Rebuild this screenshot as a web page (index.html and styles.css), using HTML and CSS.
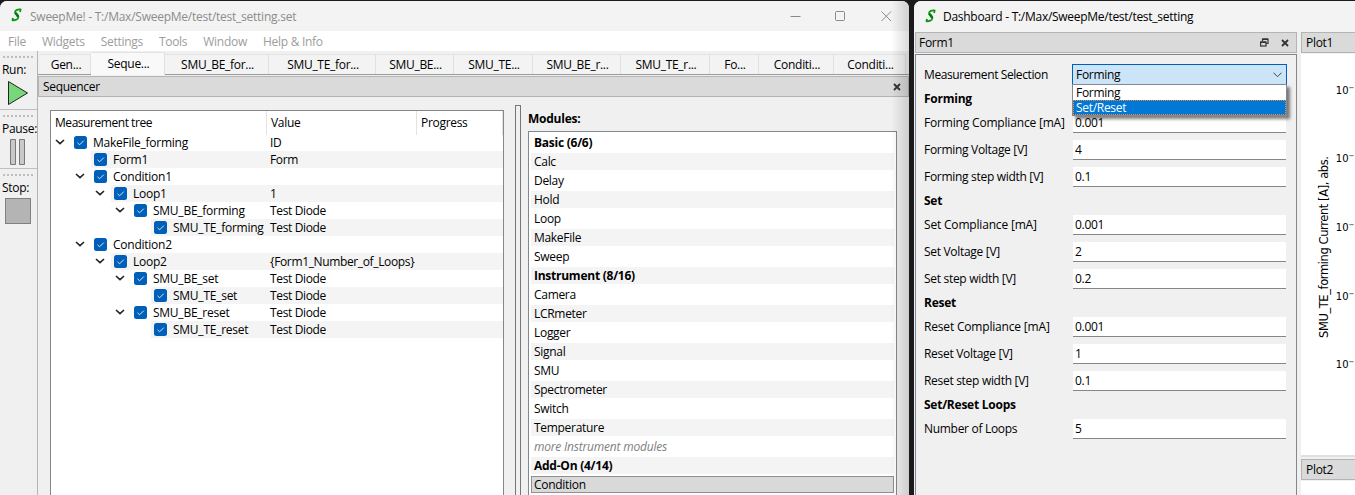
FILE: index.html
```html
<!DOCTYPE html>
<html lang="en">
<head>
  <meta charset="UTF-8">
  <meta name="viewport" content="width=device-width, initial-scale=1.0">
  <title>SweepMe!</title>
  <link rel="stylesheet" href="styles.css">
</head>
<body>

<svg class="defs">
  <symbol id="check" viewBox="0 0 13 13"><rect width="13" height="13" rx="2.5" fill="#005fb8"/><path d="M3.5 6.8L5.6 8.8L9.8 4.6" fill="none" stroke="#d5e6f5" stroke-width="1"/></symbol>
  <symbol id="arrow" viewBox="0 0 10 6"><path d="M1 1L5 4.7L9 1" fill="none" stroke="#222" stroke-width="1.6"/></symbol>
  <symbol id="logo" viewBox="0 0 11 14"><path d="M9.200 3.200L9.600 1.500C7 1.200 4.200 1.800 4.100 4C4.100 6.200 7.600 6.600 7.300 9.200C7 11.600 4 12.500 1.500 12.200L1.900 10.600" fill="none" stroke="#0b9a10" stroke-width="1.900" stroke-linejoin="round" stroke-linecap="round"/><path d="M4.400 4.600C5 6.200 7 7 7 9" fill="none" stroke="#067a10" stroke-width="2.600"/></symbol>
  <symbol id="close" viewBox="0 0 8 8"><path d="M1 1L7 7M7 1L1 7" stroke="#333" stroke-width="1.8"/></symbol>
</svg>

<div class="desktop">
  <div class="window main-window">
    <div class="titlebar inactive">
      <svg class="logo"><use href="#logo"/></svg>
      <span class="title">SweepMe! - T:/Max/SweepMe/test/test_setting.set</span>
      <svg class="win-buttons" viewBox="0 0 104 12"><path d="M0.5 6.5H10.5M45.500 2.5a1 1 0 0 1 1-1h7a1 1 0 0 1 1 1V9.500a1 1 0 0 1-1 1H46.500a1 1 0 0 1-1-1ZM91.500 1.500L101 11M101 1.500L91.500 11" fill="none" stroke="#8a8a8a"/></svg>
    </div>
    <div class="menubar">
      <span>File</span><span>Widgets</span><span>Settings</span><span>Tools</span><span>Window</span><span>Help &amp; Info</span>
    </div>
    <div class="workspace">
      <div class="toolbar">
        <div class="tool">
          <div class="grip"></div>
          <span>Run:</span>
          <svg width="26" height="26" viewBox="0 0 26 26"><path d="M3.500 1.500V24.500L22.500 13Z" fill="#78d778" stroke="#222"/></svg>
        </div>
        <div class="tool">
          <div class="grip"></div>
          <span>Pause:</span>
          <svg width="26" height="26" viewBox="0 0 26 26"><path d="M5.500 0.500H10.500V25.500H5.500ZM14.500 0.500H19.500V25.500H14.500Z" fill="#c8c8c8" stroke="#787878"/></svg>
        </div>
        <div class="tool last">
          <div class="grip"></div>
          <span>Stop:</span>
          <svg width="26" height="26" viewBox="0 0 26 26"><rect x="0.500" y="0.500" width="25" height="25" fill="#b4b4b4" stroke="#808080"/></svg>
        </div>
      </div>

      <div class="content">
        <div class="tabs">
          <div class="tab">Gen...</div>
          <div class="tab active">Seque...</div>
          <div class="tab">SMU_BE_for...</div>
          <div class="tab">SMU_TE_for...</div>
          <div class="tab">SMU_BE...</div>
          <div class="tab">SMU_TE...</div>
          <div class="tab">SMU_BE_r...</div>
          <div class="tab">SMU_TE_r...</div>
          <div class="tab">Fo...</div>
          <div class="tab">Conditi...</div>
          <div class="tab">Conditi...</div>
        </div>
        <div class="dock-title">
          <span>Sequencer</span>
          <svg class="close"><use href="#close"/></svg>
        </div>

        <div class="panels">
          <div class="tree">
            <div class="tree-head"><span>Measurement tree</span><span>Value</span><span>Progress</span></div>
            <div class="row l0"><svg class="arrow"><use href="#arrow"/></svg><div class="cells"><svg class="check"><use href="#check"/></svg><span class="name">MakeFile_forming</span><span class="value">ID</span></div></div>
            <div class="row l1 alt"><svg class="arrow"></svg><div class="cells"><svg class="check"><use href="#check"/></svg><span class="name">Form1</span><span class="value">Form</span></div></div>
            <div class="row l1"><svg class="arrow"><use href="#arrow"/></svg><div class="cells"><svg class="check"><use href="#check"/></svg><span class="name">Condition1</span></div></div>
            <div class="row l2 alt"><svg class="arrow"><use href="#arrow"/></svg><div class="cells"><svg class="check"><use href="#check"/></svg><span class="name">Loop1</span><span class="value">1</span></div></div>
            <div class="row l3"><svg class="arrow"><use href="#arrow"/></svg><div class="cells"><svg class="check"><use href="#check"/></svg><span class="name">SMU_BE_forming</span><span class="value">Test Diode</span></div></div>
            <div class="row l4 alt"><svg class="arrow"></svg><div class="cells"><svg class="check"><use href="#check"/></svg><span class="name">SMU_TE_forming</span><span class="value">Test Diode</span></div></div>
            <div class="row l1"><svg class="arrow"><use href="#arrow"/></svg><div class="cells"><svg class="check"><use href="#check"/></svg><span class="name">Condition2</span></div></div>
            <div class="row l2 alt"><svg class="arrow"><use href="#arrow"/></svg><div class="cells"><svg class="check"><use href="#check"/></svg><span class="name">Loop2</span><span class="value">{Form1_Number_of_Loops}</span></div></div>
            <div class="row l3"><svg class="arrow"><use href="#arrow"/></svg><div class="cells"><svg class="check"><use href="#check"/></svg><span class="name">SMU_BE_set</span><span class="value">Test Diode</span></div></div>
            <div class="row l4 alt"><svg class="arrow"></svg><div class="cells"><svg class="check"><use href="#check"/></svg><span class="name">SMU_TE_set</span><span class="value">Test Diode</span></div></div>
            <div class="row l3"><svg class="arrow"><use href="#arrow"/></svg><div class="cells"><svg class="check"><use href="#check"/></svg><span class="name">SMU_BE_reset</span><span class="value">Test Diode</span></div></div>
            <div class="row l4 alt"><svg class="arrow"></svg><div class="cells"><svg class="check"><use href="#check"/></svg><span class="name">SMU_TE_reset</span><span class="value">Test Diode</span></div></div>
          </div>
          <div class="splitter"></div>
          <div class="modules">
            <div class="modules-label">Modules:</div>
            <div class="module-list">
              <div class="group">Basic (6/6)</div>
              <div>Calc</div>
              <div>Delay</div>
              <div>Hold</div>
              <div>Loop</div>
              <div>MakeFile</div>
              <div>Sweep</div>
              <div class="group">Instrument (8/16)</div>
              <div>Camera</div>
              <div>LCRmeter</div>
              <div>Logger</div>
              <div>Signal</div>
              <div>SMU</div>
              <div>Spectrometer</div>
              <div>Switch</div>
              <div>Temperature</div>
              <div class="more">more Instrument modules</div>
              <div class="group">Add-On (4/14)</div>
              <div class="selected">Condition</div>
            </div>
          </div>
        </div>
      </div>
    </div>
    <div class="edge-shade"></div>
  </div>

  <div class="window dashboard">
    <div class="titlebar">
      <svg class="logo"><use href="#logo"/></svg>
      <span class="title">Dashboard - T:/Max/SweepMe/test/test_setting</span>
    </div>
    <div class="docks">
      <div class="form-dock">
        <div class="dock-title">
          <span>Form1</span>
          <svg class="float" viewBox="0 0 9 9"><path d="M2.500 3V1H8V5.500H6" fill="none" stroke="#333" stroke-width="1.2"/><path d="M2.500 1.300H8M0.600 4.200H6" stroke="#333" stroke-width="1.600"/><rect x="0.600" y="4" width="5.400" height="4" fill="none" stroke="#333" stroke-width="1.200"/></svg>
          <svg class="close"><use href="#close"/></svg>
        </div>
        <div class="form">
          <label class="selection">Measurement Selection</label>
          <div class="combo">
            <span>Forming</span>
            <svg width="9" height="6" viewBox="0 0 9 6"><path d="M0.500 0.700L4.500 4.700L8.500 0.700" fill="none" stroke="#444"/></svg>
            <div class="popup">
              <div>Forming</div>
              <div class="current">Set/Reset</div>
            </div>
          </div>
          <h4>Forming</h4>
          <label class="wide">Forming Compliance [mA]</label><div class="field">0.001</div>
          <label>Forming Voltage [V]</label><div class="field">4</div>
          <label>Forming step width [V]</label><div class="field">0.1</div>
          <h4>Set</h4>
          <label class="wide">Set Compliance [mA]</label><div class="field">0.001</div>
          <label>Set Voltage [V]</label><div class="field">2</div>
          <label>Set step width [V]</label><div class="field">0.2</div>
          <h4>Reset</h4>
          <label class="wide">Reset Compliance [mA]</label><div class="field">0.001</div>
          <label>Reset Voltage [V]</label><div class="field">1</div>
          <label>Reset step width [V]</label><div class="field">0.1</div>
          <h4>Set/Reset Loops</h4>
          <label>Number of Loops</label><div class="field">5</div>
        </div>
      </div>
      <div class="plots">
        <div class="dock-title"><span>Plot1</span></div>
        <svg class="plot" width="54" height="401" viewBox="0 0 54 401">
          <text class="axis" transform="translate(27 284) rotate(-90)" textLength="182">SMU_TE_forming Current [A], abs.</text>
          <text class="tick" x="34.800" y="40">10<tspan dy="-4">−</tspan></text>
          <text class="tick" x="34.800" y="108">10<tspan dy="-4">−</tspan></text>
          <text class="tick" x="34.800" y="177">10<tspan dy="-4">−</tspan></text>
          <text class="tick" x="34.800" y="246">10<tspan dy="-4">−</tspan></text>
          <text class="tick" x="34.800" y="314">10<tspan dy="-4">−</tspan></text>
        </svg>
        <div class="plot-split"></div>
        <div class="dock-title"><span>Plot2</span></div>
        <div class="plot-rest"></div>
      </div>
    </div>
  </div>
</div>

</body>
</html>
```
FILE: styles.css
```css
* {
  box-sizing: border-box;
}
body {
  margin: 0;
  overflow: hidden;
  font-family: "Open Sans", "Noto Sans", sans-serif;
  font-size: 12px;
  letter-spacing: -0.3px;
  line-height: 17px;
  color: #000;
  white-space: nowrap;
}
svg {
  display: block;
  flex: none;
}
.defs {
  display: none;
}
.desktop {
  display: flex;
  width: 1355px;
  height: 495px;
  padding-top: 1px;
  background-color: #1b1b1d;
}
.window {
  display: flex;
  flex-direction: column;
  height: 494px;
  background-color: #f0f0f0;
  overflow: hidden;
}
.main-window {
  position: relative;
  width: 909px;
  margin-right: 5px;
  border-radius: 7px 7px 0 0;
}
.dashboard {
  width: 441px;
  padding-left: 1px;
  border-radius: 7px 0 0 0;
}

/* title and menu bars */
.titlebar {
  display: flex;
  align-items: center;
  height: 30px;
  padding-left: 11px;
  background-color: #f3f3f3;
}
.dashboard .titlebar {
  height: 31px;
  margin-left: -1px;
  padding-left: 11px;
  letter-spacing: -0.28px;
}
.inactive {
  color: #8c8c8c;
  letter-spacing: -0.25px;
}
.logo {
  width: 11px;
  height: 14px;
  margin: -2px 8px 0 0;
}
.dashboard .logo {
  margin-right: 7px;
}
.win-buttons {
  width: 104px;
  height: 12px;
  margin-left: auto;
  margin-right: 15px;
}
.menubar {
  display: flex;
  gap: 16px;
  height: 20px;
  padding-left: 8px;
  line-height: 22px;
  letter-spacing: -0.28px;
  background-color: #fff;
  color: #9d9d9d;
}
.workspace {
  display: flex;
  flex: 1;
  min-height: 0;
}

/* run / pause / stop */
.toolbar {
  width: 38px;
  border-right: 1px solid #b4b4b4;
}
.tool {
  display: flex;
  flex-direction: column;
  height: 59px;
  padding: 5px 0 0 2px;
  border-bottom: 1px solid #c0c0c0;
}
.tool.last {
  border: 0;
}
.tool svg {
  margin: 2px 0 0 3px;
}
.grip {
  width: 31px;
  height: 2px;
  margin: 0 0 3px 1px;
  background: repeating-linear-gradient(90deg, #bdbdbd 0 2px, transparent 2px 4px);
}

/* tabs */
.content {
  flex: 1;
  min-width: 0;
}
.tabs {
  display: grid;
  grid-template-columns: 51px 74px 104px 107px 78px 79px 88px 89px 49px 75px 72px;
  height: 24px;
  padding: 1px 0 0 2px;
  border-bottom: 1px solid #9a9a9a;
}
.tab {
  height: 20px;
  margin-top: 2px;
  padding-left: 2px;
  line-height: 20px;
  text-align: center;
  background-color: #f3f3f3;
  border-top: 1px solid #e3e3e3;
  border-right: 1px solid #e0e0e0;
}
.tab.active {
  height: 23px;
  margin-top: 0;
  line-height: 22px;
  background-color: #f9f9f9;
}
.dock-title {
  display: flex;
  align-items: center;
  height: 21px;
  padding: 0 7px 0 4px;
  background-color: #dadada;
  border: 1px solid #b4b4b4;
}
.content .dock-title {
  margin-top: 1px;
}
.form-dock .dock-title {
  padding-left: 3px;
}
.close {
  width: 8px;
  height: 8px;
  margin-left: auto;
}
.float {
  width: 9px;
  height: 9px;
  margin-left: auto;
}
.float + .close {
  margin-left: 12px;
}

/* measurement tree */
.panels {
  display: flex;
  height: 398px;
}
.tree {
  width: 454px;
  margin: 13px 0 0 12px;
  background-color: #fff;
  border: 1px solid #828790;
  border-bottom: 0;
}
.tree-head {
  display: grid;
  grid-template-columns: 216px 150px 86px;
  height: 23px;
  line-height: 24px;
}
.tree-head span {
  padding-left: 4px;
  border-right: 1px solid #e2e2e2;
}
.tree-head span:first-child {
  letter-spacing: -0.45px;
}
.row {
  display: flex;
  align-items: center;
  height: 17px;
}
.arrow {
  width: 10px;
  height: 6px;
  margin: -1px 11px 0 4px;
}
.l1 { padding-left: 20px; }
.l2 { padding-left: 40px; }
.l3 { padding-left: 60px; }
.l4 { padding-left: 80px; }
.cells {
  display: flex;
  flex: 1;
  align-items: center;
  height: 17px;
  margin-left: -5px;
  padding-left: 3px;
}
.alt .cells {
  background-color: #f4f4f4;
}
.check {
  width: 13px;
  height: 13px;
}
.name {
  flex: 1;
  margin-left: 6px;
  letter-spacing: -0.25px;
}
.value {
  width: 233px;
  letter-spacing: -0.36px;
}
.splitter {
  width: 6px;
  margin: 8px 7px 0 11px;
  border: 1px solid #777;
  border-bottom: 0;
}

/* module list */
.modules {
  width: 369px;
  padding-top: 13px;
}
.modules-label,
.group {
  font-weight: bold;
  letter-spacing: -0.25px;
}
.module-list {
  height: 380px;
  margin-top: 4px;
  padding: 2px;
  background-color: #fff;
  border: 1px solid #828790;
}
.module-list div {
  height: 17px;
  margin-bottom: 2px;
  padding-left: 3px;
}
.module-list div:nth-child(even) {
  background-color: #f4f4f4;
}
.module-list .more {
  color: #808080;
  font-style: italic;
  letter-spacing: -0.2px;
}
.module-list .selected {
  line-height: 15px;
  background-color: #d9d9d9;
  border: 1px solid #8f8f8f;
  padding-left: 2px;
}
.edge-shade {
  position: absolute;
  top: 0;
  right: 0;
  width: 18px;
  height: 100%;
  background: linear-gradient(90deg, rgba(0, 0, 0, 0), rgba(0, 0, 0, 0.14));
}

/* dashboard */
.docks {
  display: flex;
  height: 463px;
}
.form-dock {
  width: 382px;
  margin-right: 4px;
}
.form {
  display: grid;
  grid-template-columns: 148px 215px;
  grid-auto-rows: max-content;
  row-gap: 7px;
  height: 441px;
  margin-top: 1px;
  padding: 9px 0 0 8px;
  border: 1px solid #828790;
  border-bottom: 0;
}
.form label {
  height: 20px;
  line-height: 20px;
}
.form .selection {
  line-height: 22px;
  letter-spacing: -0.4px;
}
.form .wide {
  letter-spacing: -0.18px;
}
.form h4 {
  grid-column: 1 / 3;
  height: 14px;
  margin: 0;
  font-size: 12px;
  letter-spacing: -0.25px;
  line-height: 14px;
}
.field {
  height: 20px;
  margin: 0 1px;
  padding-left: 2px;
  line-height: 20px;
  background-color: #fff;
  border-bottom: 1px solid #868686;
}
.combo {
  position: relative;
  display: flex;
  align-items: center;
  justify-content: space-between;
  height: 21px;
  padding: 0 4px 0 3px;
  background-color: #cce4f7;
  border: 1px solid #005fb8;
}
.popup {
  position: absolute;
  top: 19px;
  left: -1px;
  width: 215px;
  height: 32px;
  background-color: #fff;
  border: 1px solid #828790;
  box-shadow: 3px 3px 3px rgba(0, 0, 0, 0.5);
}
.popup div {
  height: 15px;
  padding-left: 3px;
  line-height: 15px;
}
.popup .current {
  padding-left: 2px;
  line-height: 13px;
  background-color: #0078d7;
  color: #fff;
  border: 1px dotted #ff8728;
}

/* plots */
.plots {
  width: 54px;
}
.plots .dock-title {
  border-right: 0;
}
.plot {
  margin-top: 1px;
  background-color: #fff;
}
.plot text {
  font-family: "DejaVu Sans", sans-serif;
  letter-spacing: 0;
}
.axis {
  font-size: 11.5px;
}
.tick {
  font-size: 10px;
}
.tick tspan {
  font-size: 7px;
}
.plot-split {
  height: 4px;
  border-top: 2px solid #e0e0e0;
}
.plot-rest {
  height: 20px;
  margin-top: 1px;
  background-color: #fff;
}
```
